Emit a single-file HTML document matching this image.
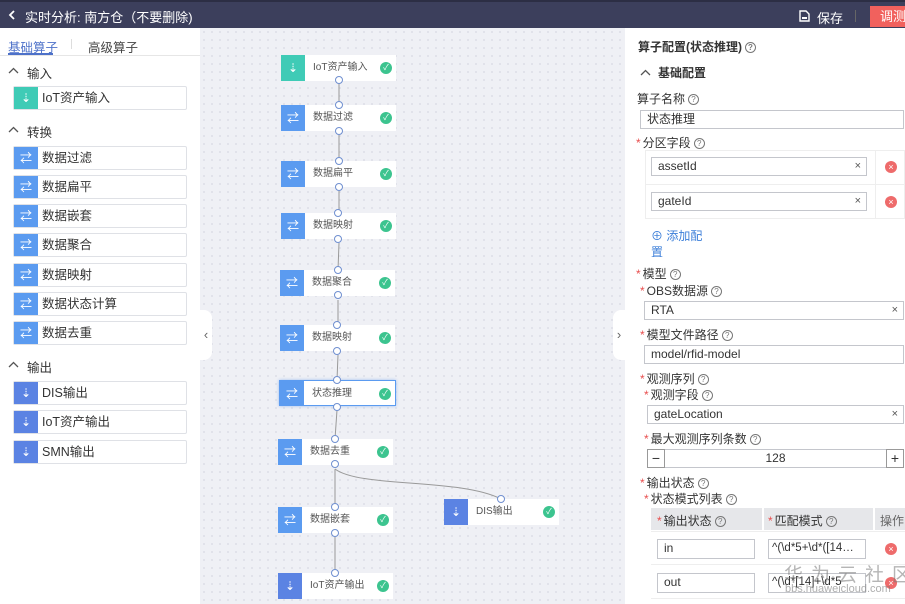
<!DOCTYPE html>
<html><head><meta charset="utf-8">
<style>
*{box-sizing:border-box;margin:0;padding:0}
body{width:905px;height:604px;overflow:hidden;position:relative;font-family:"Liberation Sans","Noto Sans CJK SC",sans-serif;font-size:12px;color:#333;background:#fff}
.a{position:absolute}
.hdr{left:0;top:0;width:905px;height:28px;background:#3c3f5c;border-top:2px solid #2c2e44;color:#fff;font-size:13px}
.canvas{left:200px;top:28px;width:425px;height:576px;background-color:#eff0f5;background-image:radial-gradient(#dcdee6 0.8px,transparent 1px);background-size:8px 8px}
.li{position:absolute;left:13px;width:174px;height:24px;border:1px solid #dfe1e6;border-radius:2px;background:#fff;font-size:12.5px;line-height:22px;padding-left:28px;color:#333}
.li i,.nd i{position:absolute;left:0;top:0;bottom:0;width:24px;background:#5b9bf0;color:#fff;font-style:normal;text-align:center;font-size:12px}
.li i.t,.nd i.t{background:#3fcbb6}
.li i.o,.nd i.o{background:#5b83e3}
.sec{position:absolute;left:8px;font-size:12.5px;color:#333;padding-left:19px}
.chev{position:absolute;left:0;top:4px}
.nd{position:absolute;width:115px;height:26px;background:#fff;font-size:10px;line-height:26px;padding-left:32px;color:#555}
.nd i{line-height:26px}
.ok{position:absolute;right:4px;top:7px;width:12px;height:12px;border-radius:50%;background:#3cc48f;color:#fff;font-size:8px;line-height:12px;text-align:center;padding:0}
.pt{position:absolute;width:8px;height:8px;border:1px solid #6f8fd0;border-radius:50%;background:#fff}
.lbl{position:absolute;font-size:12px;color:#333;white-space:nowrap}
.lbl b{color:#e84e4e;font-weight:normal;margin-right:2px}
.q{display:inline-block;width:11px;height:11px;border:1px solid #777;border-radius:50%;font-size:8px;line-height:9px;text-align:center;color:#777;margin-left:3px;vertical-align:1px}
.in{position:absolute;border:1px solid #c4c6cc;background:#fff;font-size:12px;line-height:17px;padding-left:6px;color:#333;white-space:nowrap;overflow:hidden}
.x{position:absolute;right:5px;top:0;color:#555;font-size:11px}
.del{position:absolute;width:12px;height:12px;border-radius:50%;background:#ee6b6b;color:#fff;font-size:9px;line-height:12px;text-align:center}
</style></head><body>
<div class="a hdr">
 <svg class="a" style="left:8px;top:8px" width="8" height="10"><path d="M6 1 L2 5 L6 9" stroke="#fff" stroke-width="1.8" fill="none"/></svg>
 <span class="a" style="left:25px;top:5px">实时分析: 南方仓（不要删除)</span>
 <svg class="a" style="left:799px;top:8px" width="11" height="12"><path d="M1 1 H7 L10 4 V11 H1 Z" stroke="#fff" stroke-width="1.4" fill="none"/><rect x="3" y="7" width="5" height="2" fill="#fff"/></svg>
 <span class="a" style="left:817px;top:6px">保存</span>
 <span class="a" style="left:855px;top:8px;width:1px;height:12px;background:#666"></span>
 <span class="a" style="left:870px;top:4px;width:40px;height:21px;background:#f1615d;padding-left:10px;line-height:21px">调测</span>
</div>
<!-- left panel -->
<div class="a" style="left:0;top:28px;width:200px;height:576px;background:#fff">
 <span class="a" style="left:8px;top:9px;color:#4d71c9;font-size:12.5px">基础算子</span>
 <span class="a" style="left:8px;top:25px;width:45px;height:2px;background:#4d71c9"></span>
 <span class="a" style="left:71px;top:11px;width:1px;height:10px;background:#ddd"></span>
 <span class="a" style="left:88px;top:9px;font-size:12.5px;color:#444">高级算子</span>
 <span class="a" style="left:0;top:27px;width:200px;height:1px;background:#e6e6e6"></span>
</div>
<div class="sec" style="top:63px"><svg class="chev" width="11" height="7"><path d="M1 6 L5.5 1.5 L10 6" stroke="#555" stroke-width="1.3" fill="none"/></svg>输入</div>
<div class="li" style="top:86px"><i class="t">⇣</i>IoT资产输入</div>
<div class="sec" style="top:122px"><svg class="chev" width="11" height="7"><path d="M1 6 L5.5 1.5 L10 6" stroke="#555" stroke-width="1.3" fill="none"/></svg>转换</div>
<div class="li" style="top:146px"><i>⇄</i>数据过滤</div>
<div class="li" style="top:175px"><i>⇄</i>数据扁平</div>
<div class="li" style="top:204px"><i>⇄</i>数据嵌套</div>
<div class="li" style="top:233px"><i>⇄</i>数据聚合</div>
<div class="li" style="top:263px"><i>⇄</i>数据映射</div>
<div class="li" style="top:292px"><i>⇄</i>数据状态计算</div>
<div class="li" style="top:321px"><i>⇄</i>数据去重</div>
<div class="sec" style="top:357px"><svg class="chev" width="11" height="7"><path d="M1 6 L5.5 1.5 L10 6" stroke="#555" stroke-width="1.3" fill="none"/></svg>输出</div>
<div class="li" style="top:381px"><i class="o">⇣</i>DIS输出</div>
<div class="li" style="top:410px"><i class="o">⇣</i>IoT资产输出</div>
<div class="li" style="top:440px"><i class="o">⇣</i>SMN输出</div>
<!-- canvas -->
<div class="a canvas"></div>
<div class="a" style="left:200px;top:310px;width:12px;height:50px;background:#fff;border-radius:0 8px 8px 0;color:#666;font-size:13px;line-height:50px;text-align:center">&#8249;</div>
<div class="a" style="left:613px;top:310px;width:12px;height:50px;background:#fff;border-radius:8px 0 0 8px;color:#666;font-size:13px;line-height:50px;text-align:center">&#8250;</div>
<svg class="a" style="left:200px;top:28px" width="425" height="576">
 <g stroke="#999" stroke-width="1" fill="none">
  <line x1="139" y1="52" x2="139" y2="77"/>
  <line x1="139" y1="107" x2="139" y2="133"/>
  <line x1="139" y1="163" x2="139" y2="185"/>
  <line x1="139" y1="215" x2="138" y2="242"/>
  <line x1="138" y1="272" x2="138" y2="297"/>
  <line x1="138" y1="327" x2="137" y2="352"/>
  <line x1="137" y1="382" x2="135" y2="411"/>
  <line x1="135" y1="441" x2="135" y2="479"/>
  <path d="M135 441 C160 460 260 450 301 471"/>
  <line x1="135" y1="509" x2="135" y2="545"/>
 </g>
</svg>
<div class="nd" style="left:281px;top:55px"><i class="t">⇣</i>IoT资产输入<span class="ok">✓</span></div>
<div class="nd" style="left:281px;top:105px"><i>⇄</i>数据过滤<span class="ok">✓</span></div>
<div class="nd" style="left:281px;top:161px"><i>⇄</i>数据扁平<span class="ok">✓</span></div>
<div class="nd" style="left:281px;top:213px"><i>⇄</i>数据映射<span class="ok">✓</span></div>
<div class="nd" style="left:280px;top:270px"><i>⇄</i>数据聚合<span class="ok">✓</span></div>
<div class="nd" style="left:280px;top:325px"><i>⇄</i>数据映射<span class="ok">✓</span></div>
<div class="nd" style="left:279px;top:380px;width:117px;border:1px solid #5b9bf0;box-shadow:0 0 3px #9bbcf0"><i>⇄</i>状态推理<span class="ok">✓</span></div>
<div class="nd" style="left:278px;top:439px"><i>⇄</i>数据去重<span class="ok">✓</span></div>
<div class="nd" style="left:278px;top:507px"><i>⇄</i>数据嵌套<span class="ok">✓</span></div>
<div class="nd" style="left:278px;top:573px"><i class="o">⇣</i>IoT资产输出<span class="ok">✓</span></div>
<div class="nd" style="left:444px;top:499px"><i class="o">⇣</i>DIS输出<span class="ok">✓</span></div>
<div class="pt" style="left:335px;top:76px"></div><div class="pt" style="left:335px;top:101px"></div>
<div class="pt" style="left:335px;top:127px"></div><div class="pt" style="left:335px;top:157px"></div>
<div class="pt" style="left:335px;top:183px"></div><div class="pt" style="left:334px;top:209px"></div>
<div class="pt" style="left:334px;top:235px"></div><div class="pt" style="left:334px;top:266px"></div>
<div class="pt" style="left:334px;top:291px"></div><div class="pt" style="left:333px;top:321px"></div>
<div class="pt" style="left:333px;top:347px"></div><div class="pt" style="left:333px;top:376px"></div>
<div class="pt" style="left:333px;top:403px"></div><div class="pt" style="left:331px;top:435px"></div>
<div class="pt" style="left:331px;top:460px"></div><div class="pt" style="left:331px;top:503px"></div>
<div class="pt" style="left:331px;top:529px"></div><div class="pt" style="left:331px;top:569px"></div>
<div class="pt" style="left:497px;top:495px"></div>
<!-- right panel -->
<div class="a" style="left:625px;top:28px;width:280px;height:576px;background:#fff"></div>
<div class="lbl" style="left:638px;top:38px;font-weight:bold">算子配置(状态推理)<span class="q">?</span></div>
<div class="lbl" style="left:640px;top:64px;font-weight:bold;padding-left:18px"><svg class="chev" style="top:5px" width="11" height="7"><path d="M1 6 L5.5 1.5 L10 6" stroke="#555" stroke-width="1.3" fill="none"/></svg>基础配置</div>
<div class="lbl" style="left:637px;top:90px">算子名称<span class="q">?</span></div>
<div class="in" style="left:640px;top:110px;width:264px;height:19px">状态推理</div>
<div class="lbl" style="left:636px;top:134px"><b>*</b>分区字段<span class="q">?</span></div>
<div class="a" style="left:645px;top:150px;width:260px;height:69px;border:1px solid #eee"></div>
<div class="a" style="left:645px;top:184px;width:260px;height:1px;background:#eee"></div>
<div class="a" style="left:875px;top:150px;width:1px;height:69px;background:#eee"></div>
<div class="in" style="left:651px;top:157px;width:216px;height:19px">assetId<span class="x">×</span></div>
<div class="in" style="left:651px;top:192px;width:216px;height:19px">gateId<span class="x">×</span></div>
<div class="del" style="left:885px;top:161px">×</div>
<div class="del" style="left:885px;top:196px">×</div>
<div class="lbl" style="left:651px;top:227px;color:#3d7fd9">⊕ 添加配</div>
<div class="lbl" style="left:651px;top:243px;color:#3d7fd9">置</div>
<div class="lbl" style="left:636px;top:265px"><b>*</b>模型<span class="q">?</span></div>
<div class="lbl" style="left:640px;top:282px"><b>*</b>OBS数据源<span class="q">?</span></div>
<div class="in" style="left:644px;top:301px;width:260px;height:19px">RTA<span class="x">×</span></div>
<div class="lbl" style="left:640px;top:326px"><b>*</b>模型文件路径<span class="q">?</span></div>
<div class="in" style="left:644px;top:345px;width:260px;height:19px">model/rfid-model</div>
<div class="lbl" style="left:640px;top:370px"><b>*</b>观测序列<span class="q">?</span></div>
<div class="lbl" style="left:644px;top:386px"><b>*</b>观测字段<span class="q">?</span></div>
<div class="in" style="left:647px;top:405px;width:257px;height:19px">gateLocation<span class="x">×</span></div>
<div class="lbl" style="left:644px;top:430px"><b>*</b>最大观测序列条数<span class="q">?</span></div>
<div class="in" style="left:647px;top:449px;width:257px;height:19px;text-align:center;padding:0">128</div>
<div class="a" style="left:647px;top:449px;width:18px;height:19px;border:1px solid #999;font-size:14px;line-height:16px;text-align:center">−</div>
<div class="a" style="left:886px;top:449px;width:18px;height:19px;border:1px solid #999;font-size:14px;line-height:16px;text-align:center">+</div>
<div class="lbl" style="left:640px;top:474px"><b>*</b>输出状态<span class="q">?</span></div>
<div class="lbl" style="left:644px;top:490px"><b>*</b>状态模式列表<span class="q">?</span></div>
<div class="a" style="left:651px;top:508px;width:254px;height:22px;background:#e6e7ea"></div>
<div class="a" style="left:762px;top:508px;width:2px;height:90px;background:#fff"></div>
<div class="a" style="left:873px;top:508px;width:2px;height:90px;background:#fff"></div>
<div class="lbl" style="left:657px;top:512px"><b>*</b>输出状态<span class="q">?</span></div>
<div class="lbl" style="left:768px;top:512px"><b>*</b>匹配模式<span class="q">?</span></div>
<div class="lbl" style="left:880px;top:512px;color:#666">操作</div>
<div class="a" style="left:651px;top:531px;width:254px;height:1px;background:#eee"></div>
<div class="a" style="left:651px;top:564px;width:254px;height:1px;background:#eee"></div>
<div class="a" style="left:651px;top:598px;width:254px;height:1px;background:#eee"></div>
<div class="in" style="left:657px;top:539px;width:98px;height:20px">in</div>
<div class="in" style="left:768px;top:539px;width:98px;height:20px;font-size:11.5px;padding-left:3px">^(\d*5+\d*([14…</div>
<div class="in" style="left:657px;top:573px;width:98px;height:20px">out</div>
<div class="in" style="left:768px;top:573px;width:98px;height:20px;font-size:11.5px;padding-left:3px">^(\d*[14]+\d*5</div>
<div class="del" style="left:885px;top:543px">×</div>
<div class="del" style="left:885px;top:577px">×</div>
<div class="a" style="left:784px;top:560px;font-size:19px;color:rgba(120,120,120,0.55);letter-spacing:8px;white-space:nowrap">华为云社区</div>
<div class="a" style="left:785px;top:583px;font-size:11px;color:rgba(120,120,120,0.6);white-space:nowrap">bbs.huaweicloud.com</div>
</body></html>
